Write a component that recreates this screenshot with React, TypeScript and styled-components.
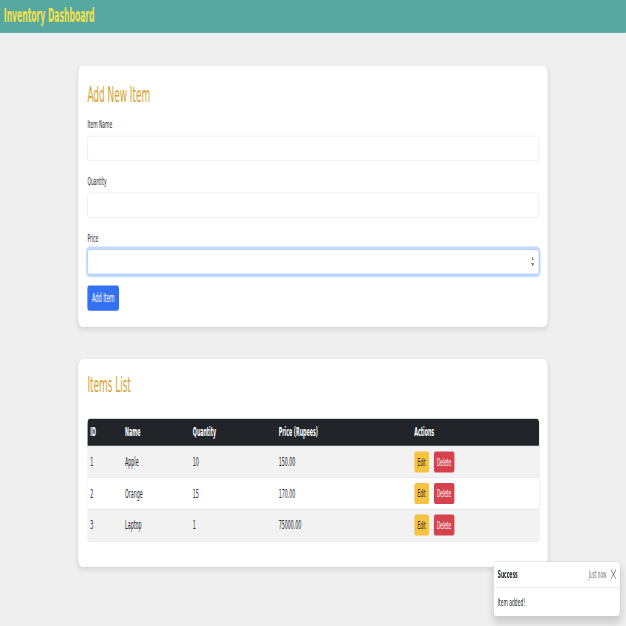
import React from "react";
import styled, { createGlobalStyle } from "styled-components";

// the reference is a wide page squeezed into 626x626, so the page is laid
// out at its original size and the stage scales it down
const SX = 0.32;
const SY = 0.7;

const GlobalStyle = createGlobalStyle`
  html, body {
    margin: 0;
    padding: 0;
    background: #efefef;
    overflow: hidden;
  }
`;

const Viewport = styled.div`
  width: 626px;
  height: 626px;
  overflow: hidden;
`;

const Stage = styled.div`
  position: relative;
  width: ${626 / SX}px;
  height: ${626 / SY}px;
  transform: scale(${SX}, ${SY});
  transform-origin: 0 0;
  font-family: "DejaVu Sans Condensed", "DejaVu Sans", Verdana, sans-serif;
  color: #212529;
  background: #efefef;
`;

const TopBar = styled.header`
  height: 47px;
  box-sizing: border-box;
  padding: 6px 12px;
  background: #57a8a1;
`;

const Brand = styled.span`
  font-size: 26.5px;
  font-weight: 700;
  line-height: 1.2;
  color: #f4e04d;
`;

const Main = styled.main`
  display: flex;
  flex-direction: column;
  align-items: center;
  gap: 46px;
  padding-top: 47px;
`;

const Card = styled.section<{ $padTop: number }>`
  width: 1466px;
  box-sizing: border-box;
  padding: ${({ $padTop }) => $padTop}px 26px 23px 28px;
  background: #fff;
  border-radius: 12px;
  box-shadow: 0 4px 12px rgba(0, 0, 0, 0.1);
`;

const Heading = styled.h2<{ $gap: number }>`
  margin: 0 0 ${({ $gap }) => $gap}px;
  font-size: 31px;
  font-weight: 400;
  line-height: 36px;
  color: #d9a22c;
`;

const Fields = styled.div`
  display: flex;
  flex-direction: column;
  gap: 19px;
`;

const Field = styled.label`
  display: flex;
  flex-direction: column;
`;

const LabelText = styled.span`
  font-size: 15.5px;
  line-height: 21px;
  margin-bottom: 5px;
`;

const Input = styled.input<{ $active?: boolean }>`
  height: 36px;
  box-sizing: border-box;
  padding: 6px 12px;
  font-family: inherit;
  font-size: 16px;
  border: 1px solid ${({ $active }) => ($active ? "#86b7fe" : "#dee2e6")};
  border-radius: 6px;
  outline: none;
  box-shadow: ${({ $active }) => ($active ? "0 0 0 4px rgba(13, 110, 253, 0.25)" : "none")};
`;

const PrimaryButton = styled.button`
  margin-top: 16px;
  align-self: flex-start;
  height: 36px;
  padding: 0 14px;
  font-family: inherit;
  font-size: 17.5px;
  color: #fff;
  background: #3470f2;
  border: none;
  border-radius: 6px;
`;

const TableBox = styled.div`
  margin-bottom: 15px;
  border-radius: 8px;
  overflow: hidden;
  font-size: 16.5px;
  box-shadow: 0 1px 2px rgba(0, 0, 0, 0.08);
`;

const cols = "7.7% 15% 19% 30% 1fr";

const HeadRow = styled.div`
  display: grid;
  grid-template-columns: ${cols};
  align-items: center;
  height: 39px;
  font-weight: 700;
  color: #fff;
  background: #212529;
`;

const BodyRow = styled.div<{ $striped: boolean }>`
  display: grid;
  grid-template-columns: ${cols};
  align-items: center;
  height: 44px;
  border-top: 1px solid #dee2e6;
  background: ${({ $striped }) => ($striped ? "#f2f2f2" : "#fff")};
`;

const Cell = styled.div`
  padding: 0 9px;
`;

const Actions = styled.div`
  display: flex;
  gap: 15px;
  padding: 0 9px;
`;

const SmallButton = styled.button<{ $kind: "edit" | "delete" }>`
  height: 30px;
  padding: 0 10px;
  font-family: inherit;
  font-size: 15px;
  border: none;
  border-radius: 5px;
  color: ${({ $kind }) => ($kind === "edit" ? "#212529" : "#fff")};
  background: ${({ $kind }) => ($kind === "edit" ? "#f6c23f" : "#d4434d")};
`;

const Toast = styled.div`
  position: absolute;
  right: 18px;
  bottom: 13px;
  width: 394px;
  background: #fff;
  border: 1px solid rgba(0, 0, 0, 0.15);
  border-radius: 8px;
  box-shadow: 0 8px 16px rgba(0, 0, 0, 0.15);
`;

const ToastHead = styled.div`
  display: flex;
  align-items: center;
  height: 36px;
  padding: 0 10px 0 12px;
  border-bottom: 1px solid rgba(0, 0, 0, 0.1);
`;

const ToastTitle = styled.strong`
  margin-right: auto;
  font-size: 15.5px;
`;

const ToastTime = styled.small`
  font-size: 14.5px;
  color: #6c757d;
`;

const CloseButton = styled.button`
  display: flex;
  margin-left: 12px;
  padding: 0;
  border: none;
  background: none;
  color: #777;
`;

const ToastBody = styled.div`
  padding: 11px 12px 8px;
  font-size: 15.5px;
  line-height: 1.4;
`;

const items = [
  { id: 1, name: "Apple", qty: 10, price: 150 },
  { id: 2, name: "Orange", qty: 15, price: 170 },
  { id: 3, name: "Laptop", qty: 1, price: 75000 },
];

export default function App() {
  return (
    <Viewport>
      <GlobalStyle />
      <Stage>
        <TopBar>
          <Brand>Inventory Dashboard</Brand>
        </TopBar>

        <Main>
          <Card $padTop={22}>
            <Heading $gap={16}>Add New Item</Heading>
            <Fields>
              <Field>
                <LabelText>Item Name</LabelText>
                <Input type="text" />
              </Field>
              <Field>
                <LabelText>Quantity</LabelText>
                <Input type="number" />
              </Field>
              <Field>
                <LabelText>Price</LabelText>
                <Input type="number" $active autoFocus />
              </Field>
            </Fields>
            <PrimaryButton>Add Item</PrimaryButton>
          </Card>

          <Card $padTop={18}>
            <Heading $gap={31}>Items List</Heading>
            <TableBox>
              <HeadRow>
                <Cell>ID</Cell>
                <Cell>Name</Cell>
                <Cell>Quantity</Cell>
                <Cell>Price (Rupees)</Cell>
                <Cell>Actions</Cell>
              </HeadRow>
              {items.map((it, i) => (
                <BodyRow key={it.id} $striped={i % 2 === 0}>
                  <Cell>{it.id}</Cell>
                  <Cell>{it.name}</Cell>
                  <Cell>{it.qty}</Cell>
                  <Cell>{it.price.toFixed(2)}</Cell>
                  <Actions>
                    <SmallButton $kind="edit">Edit</SmallButton>
                    <SmallButton $kind="delete">Delete</SmallButton>
                  </Actions>
                </BodyRow>
              ))}
            </TableBox>
          </Card>
        </Main>

        <Toast>
          <ToastHead>
            <ToastTitle>Success</ToastTitle>
            <ToastTime>Just now</ToastTime>
            <CloseButton aria-label="Close">
              <svg width="20" height="15" viewBox="0 0 20 15" fill="none" stroke="currentColor" strokeWidth="1.6">
                <path d="M2 1 L18 14 M18 1 L2 14" />
              </svg>
            </CloseButton>
          </ToastHead>
          <ToastBody>Item added!</ToastBody>
        </Toast>
      </Stage>
    </Viewport>
  );
}
